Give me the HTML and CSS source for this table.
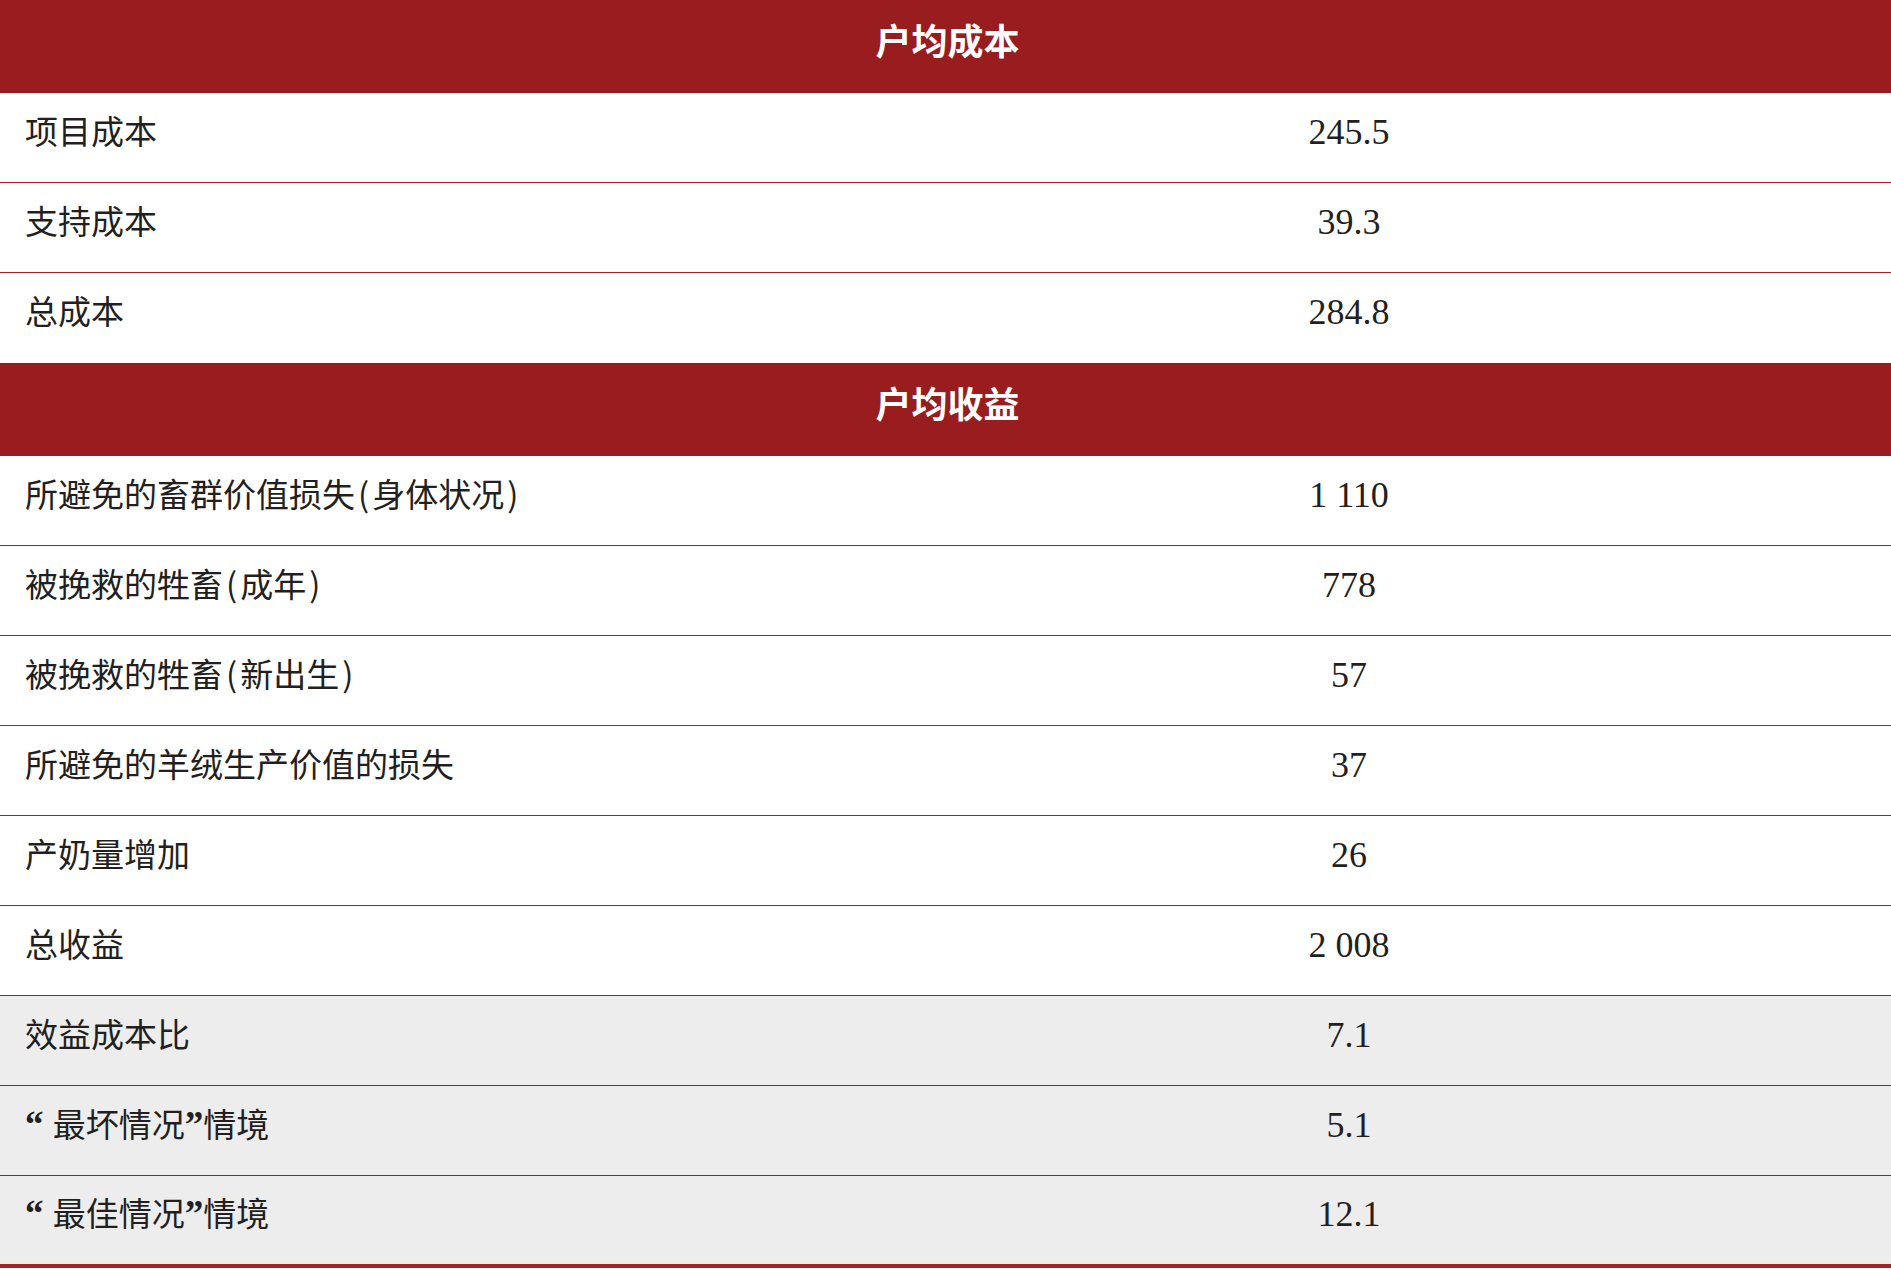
FILE: index.html
```html
<!DOCTYPE html>
<html lang="zh-CN">
<head>
<meta charset="utf-8">
<title>户均成本与收益</title>
<link rel="stylesheet" href="styles.css">
</head>
<body>
<div class="table">
  <div class="head">户均成本</div>
  <div class="row line"><div class="label">项目成本</div><div class="value">245.5</div></div>
  <div class="row line"><div class="label">支持成本</div><div class="value">39.3</div></div>
  <div class="row"><div class="label">总成本</div><div class="value">284.8</div></div>
  <div class="head">户均收益</div>
  <div class="row line"><div class="label">所避免的畜群价值损失<span class="po">(</span>身体状况<span class="pc">)</span></div><div class="value">1 110</div></div>
  <div class="row line"><div class="label">被挽救的牲畜<span class="po">(</span>成年<span class="pc">)</span></div><div class="value">778</div></div>
  <div class="row line"><div class="label">被挽救的牲畜<span class="po">(</span>新出生<span class="pc">)</span></div><div class="value">57</div></div>
  <div class="row line"><div class="label">所避免的羊绒生产价值的损失</div><div class="value">37</div></div>
  <div class="row line"><div class="label">产奶量增加</div><div class="value">26</div></div>
  <div class="row line"><div class="label">总收益</div><div class="value">2 008</div></div>
  <div class="row line shade"><div class="label">效益成本比</div><div class="value">7.1</div></div>
  <div class="row line shade"><div class="label"><span class="q">“ </span>最坏情况<span class="q">”</span>情境</div><div class="value">5.1</div></div>
  <div class="row shade last"><div class="label"><span class="q">“ </span>最佳情况<span class="q">”</span>情境</div><div class="value">12.1</div></div>
</div>
</body>
</html>
```

FILE: styles.css
```css
html, body {
  margin: 0;
  padding: 0;
  background: #ffffff;
}

.table {
  width: 1891px;
  display: flex;
  flex-direction: column;
}

.head {
  height: 93px;
  box-sizing: border-box;
  background: #991c1f;
  color: #ffffff;
  font-family: "Noto Sans CJK SC", "Noto Sans", sans-serif;
  font-weight: 700;
  font-size: 36px;
  display: flex;
  align-items: center;
  justify-content: center;
  padding-bottom: 16px;
  padding-left: 4px;
}

.row {
  height: 90px;
  box-sizing: border-box;
  display: grid;
  grid-template-columns: 807px 1fr;
  align-items: center;
  padding-bottom: 12px;
  color: #231f20;
  background: #ffffff;
}

.row.line {
  border-bottom: 1px solid #a51c22;
}

.row.shade {
  background: #ededed;
}

.row.last {
  height: 92px;
  border-bottom: 4px solid #a4242a;
}

.label {
  padding-left: 25px;
  padding-bottom: 4px;
  font-family: "Noto Sans CJK SC", "Noto Sans", sans-serif;
  font-size: 33px;
  font-weight: 400;
  white-space: nowrap;
}

.po {
  margin-left: 3px;
  margin-right: 3px;
}

.pc {
  margin-left: 3px;
  margin-right: 3px;
}

.q {
  font-family: "Liberation Serif", serif;
  font-size: 37px;
  font-weight: 700;
}

.value {
  text-align: center;
  font-family: "Liberation Serif", serif;
  font-size: 36px;
  font-weight: 400;
}
```
